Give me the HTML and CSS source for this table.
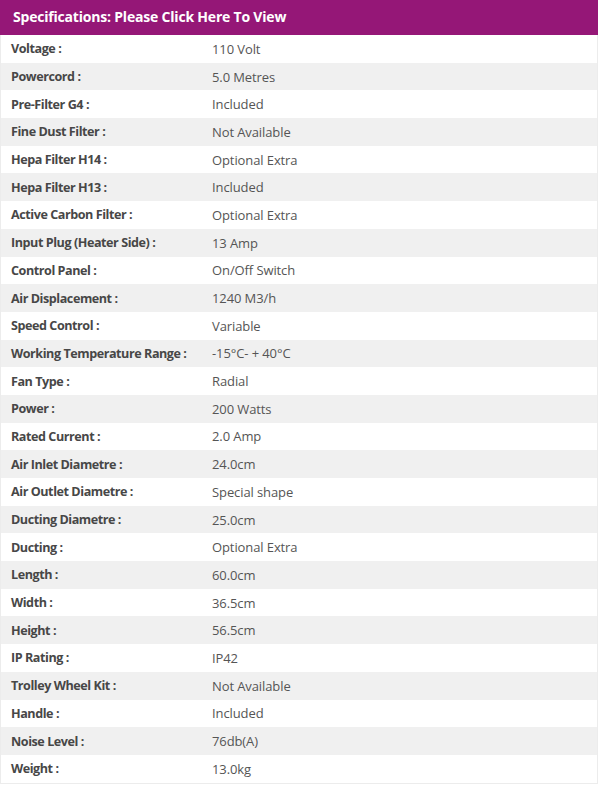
FILE: index.html
```html
<!DOCTYPE html>
<html>
<head>
<meta charset="utf-8">
<link rel="stylesheet" href="styles.css">
</head>
<body>
<div class="panel">
  <div class="panel-head">Specifications: Please Click Here To View</div>
  <div class="spec-list">
    <div class="row"><div class="label">Voltage :</div><div class="value">110 Volt</div></div>
    <div class="row"><div class="label">Powercord :</div><div class="value">5.0 Metres</div></div>
    <div class="row"><div class="label">Pre-Filter G4 :</div><div class="value">Included</div></div>
    <div class="row"><div class="label">Fine Dust Filter :</div><div class="value">Not Available</div></div>
    <div class="row"><div class="label">Hepa Filter H14 :</div><div class="value">Optional Extra</div></div>
    <div class="row"><div class="label">Hepa Filter H13 :</div><div class="value">Included</div></div>
    <div class="row"><div class="label">Active Carbon Filter :</div><div class="value">Optional Extra</div></div>
    <div class="row"><div class="label">Input Plug (Heater Side) :</div><div class="value">13 Amp</div></div>
    <div class="row"><div class="label">Control Panel :</div><div class="value">On/Off Switch</div></div>
    <div class="row"><div class="label">Air Displacement :</div><div class="value">1240 M3/h</div></div>
    <div class="row"><div class="label">Speed Control :</div><div class="value">Variable</div></div>
    <div class="row"><div class="label">Working Temperature Range :</div><div class="value">-15°C- + 40°C</div></div>
    <div class="row"><div class="label">Fan Type :</div><div class="value">Radial</div></div>
    <div class="row"><div class="label">Power :</div><div class="value">200 Watts</div></div>
    <div class="row"><div class="label">Rated Current :</div><div class="value">2.0 Amp</div></div>
    <div class="row"><div class="label">Air Inlet Diametre :</div><div class="value">24.0cm</div></div>
    <div class="row"><div class="label">Air Outlet Diametre :</div><div class="value">Special shape</div></div>
    <div class="row"><div class="label">Ducting Diametre :</div><div class="value">25.0cm</div></div>
    <div class="row"><div class="label">Ducting :</div><div class="value">Optional Extra</div></div>
    <div class="row"><div class="label">Length :</div><div class="value">60.0cm</div></div>
    <div class="row"><div class="label">Width :</div><div class="value">36.5cm</div></div>
    <div class="row"><div class="label">Height :</div><div class="value">56.5cm</div></div>
    <div class="row"><div class="label">IP Rating :</div><div class="value">IP42</div></div>
    <div class="row"><div class="label">Trolley Wheel Kit :</div><div class="value">Not Available</div></div>
    <div class="row"><div class="label">Handle :</div><div class="value">Included</div></div>
    <div class="row"><div class="label">Noise Level :</div><div class="value">76db(A)</div></div>
    <div class="row"><div class="label">Weight :</div><div class="value">13.0kg</div></div>
  </div>
</div>
</body>
</html>
```

FILE: styles.css
```css
html, body {
  margin: 0;
  padding: 0;
  background: #fff;
}
body {
  font-family: "Open Sans", "Noto Sans", sans-serif;
  width: 598px;
}
.panel {
  width: 598px;
}
.panel-head {
  background: #951777;
  color: #fff;
  font-weight: 700;
  font-size: 14px;
  height: 35px;
  line-height: 33px;
  padding-left: 13px;
  box-sizing: border-box;
  letter-spacing: -0.2px;
}
.spec-list {
  border: 1px solid #ececec;
  border-top: none;
  display: flex;
  flex-direction: column;
}
.row {
  display: flex;
  height: 27.7px;
  align-items: center;
  font-size: 13px;
}
.row:nth-child(even) {
  background: #f0f0f0;
}
.label {
  width: 211px;
  padding-left: 10px;
  box-sizing: border-box;
  font-weight: 700;
  font-size: 12.6px;
  color: #474747;
  letter-spacing: -0.45px;
}
.value {
  color: #555;
  letter-spacing: -0.1px;
}
```
